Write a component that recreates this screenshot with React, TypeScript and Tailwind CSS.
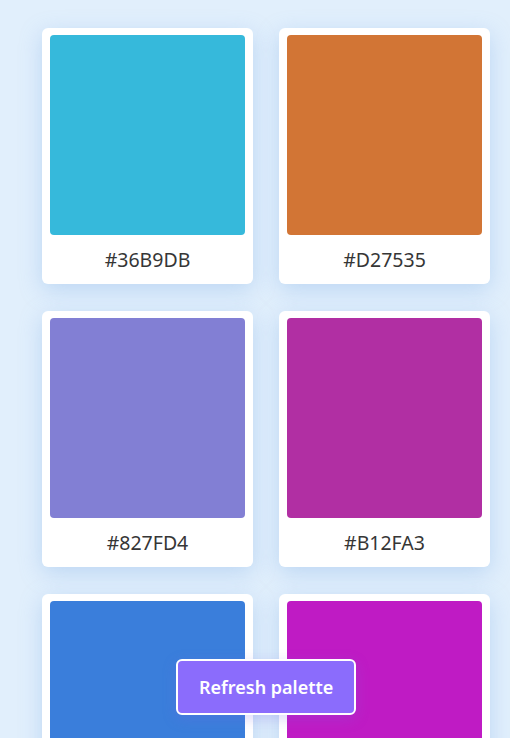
const colors = ["#36B9DB", "#D27535", "#827FD4", "#B12FA3", "#3A7EDB", "#BF1BC4"];

function Swatch({ hex }: { hex: string }) {
  return (
    <div className="w-[211px] h-[256px] bg-white rounded-[6px] px-[8px] pt-[7px] shadow-[0_6px_22px_rgba(120,170,230,0.35)] flex flex-col">
      <div className="h-[200px] rounded-[4px]" style={{ backgroundColor: hex }} />
      <div className="flex-1 flex items-center justify-center text-[19.5px] text-[#363636] font-['Noto_Sans',sans-serif]">
        {hex}
      </div>
    </div>
  );
}

export default function App() {
  return (
    <div className="relative h-[738px] overflow-hidden bg-[#e1effc]">
      <div className="pl-[42px] pr-[20px] pt-[28px] grid grid-cols-[211px_211px] gap-x-[26px] gap-y-[27px]">
        {colors.map((c) => (
          <Swatch key={c} hex={c} />
        ))}
      </div>
      <div className="absolute left-[176px] bottom-[23px]">
        <button className="h-[56px] px-[21px] rounded-[6px] border-2 border-white bg-[#8b6cfc] text-white text-[18px] font-semibold font-['Noto_Sans',sans-serif] shadow-[0_4px_14px_rgba(120,100,230,0.25)]">
          Refresh palette
        </button>
      </div>
    </div>
  );
}
